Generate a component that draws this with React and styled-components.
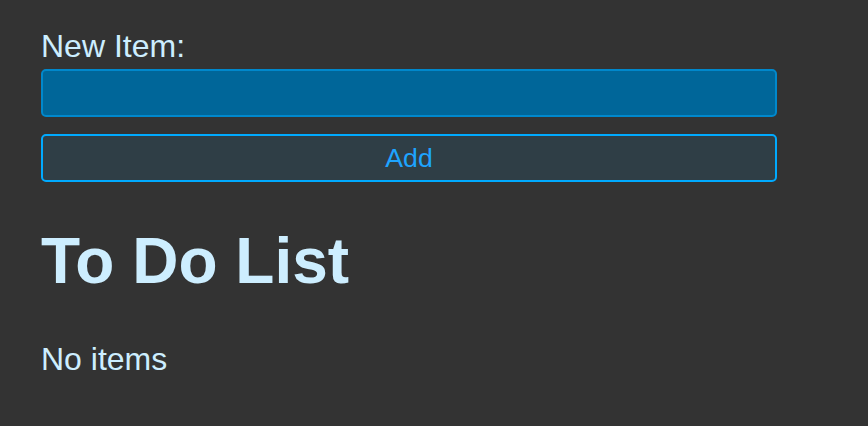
import React, { useState } from "react";
import styled, { createGlobalStyle } from "styled-components";

const GlobalStyle = createGlobalStyle`
  html, body {
    margin: 0;
    padding: 0;
    background: #333333;
  }
  body {
    font-family: "Liberation Sans", Arial, sans-serif;
    color: #cdeeff;
  }
`;

const Page = styled.div`
  min-height: 426px;
  padding: 28px 41px 0 41px;
  box-sizing: border-box;
`;

const Form = styled.form`
  width: 736px;
  display: flex;
  flex-direction: column;
`;

const Label = styled.label`
  font-size: 32px;
  line-height: 37px;
  margin-bottom: 4px;
`;

const Input = styled.input`
  height: 48px;
  box-sizing: border-box;
  border: 2px solid #0088cc;
  border-radius: 5px;
  background: #006699;
  color: #cdeeff;
  font-family: inherit;
  font-size: 26.7px;
  padding: 0 10px;
  outline: none;
`;

const Button = styled.button`
  margin-top: 17px;
  height: 48px;
  box-sizing: border-box;
  border: 2px solid #00aaff;
  border-radius: 5px;
  background: #2f3e46;
  color: #1ea4ff;
  font-family: inherit;
  font-size: 26.7px;
  cursor: pointer;
`;

const Title = styled.h1`
  font-size: 64px;
  font-weight: bold;
  line-height: 74px;
  margin: 42px 0 43px 0;
`;

const Empty = styled.p`
  font-size: 32px;
  line-height: 37px;
  margin: 0;
`;

const List = styled.ul`
  margin: 0;
  padding-left: 40px;
  font-size: 32px;
`;

export default function App() {
  const [text, setText] = useState("");
  const [items, setItems] = useState([]);

  const addItem = (e) => {
    e.preventDefault();
    if (!text.trim()) return;
    setItems([...items, text.trim()]);
    setText("");
  };

  return (
    <>
      <GlobalStyle />
      <Page>
        <Form onSubmit={addItem}>
          <Label htmlFor="new-item">New Item:</Label>
          <Input id="new-item" value={text} onChange={(e) => setText(e.target.value)} />
          <Button type="submit">Add</Button>
        </Form>
        <Title>To Do List</Title>
        {items.length === 0 ? (
          <Empty>No items</Empty>
        ) : (
          <List>
            {items.map((item, i) => (
              <li key={i}>{item}</li>
            ))}
          </List>
        )}
      </Page>
    </>
  );
}
